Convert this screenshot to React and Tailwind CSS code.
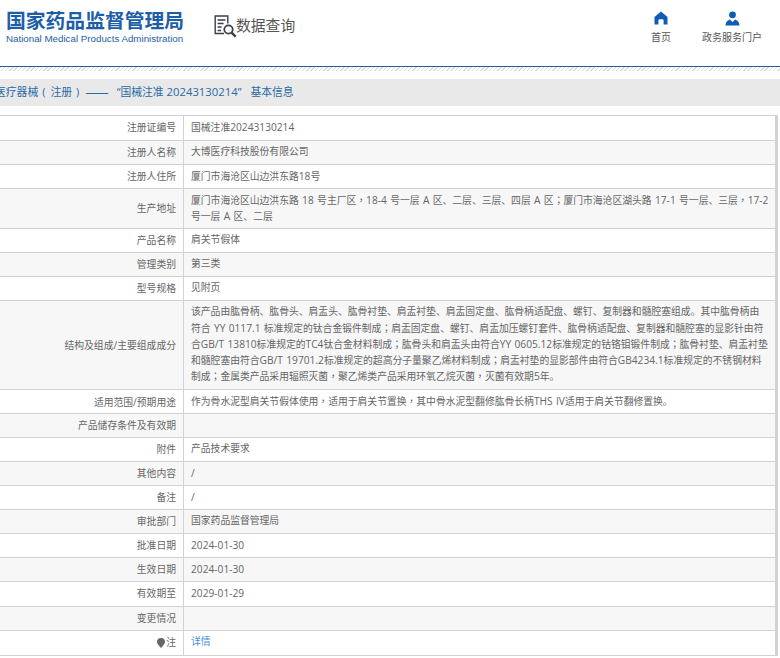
const FONT = "font-['Open_Sans','Noto_Sans_CJK_SC',sans-serif]";

const rows = [
  { label: '注册证编号', extra: 'min-h-[25px]', value: ['国械注准20243130214'] },
  { label: '注册人名称', value: ['大博医疗科技股份有限公司'] },
  { label: '注册人住所', value: ['厦门市海沧区山边洪东路18号'] },
  {
    label: '生产地址',
    value: [
      '厦门市海沧区山边洪东路 18 号主厂区，18-4 号一层 A 区、二层、三层、四层 A 区；厦门市海沧区湖头路 17-1 号一层、三层，17-2',
      '号一层 A 区、二层',
    ],
  },
  { label: '产品名称', value: ['肩关节假体'] },
  { label: '管理类别', value: ['第三类'] },
  { label: '型号规格', value: ['见附页'] },
  {
    label: '结构及组成/主要组成成分',
    extra: 'min-h-[89px]',
    value: [
      '该产品由肱骨柄、肱骨头、肩盂头、肱骨衬垫、肩盂衬垫、肩盂固定盘、肱骨柄适配盘、螺钉、复制器和髓腔塞组成。其中肱骨柄由',
      '符合 YY 0117.1 标准规定的钛合金锻件制成；肩盂固定盘、螺钉、肩盂加压螺钉套件、肱骨柄适配盘、复制器和髓腔塞的显影针由符',
      '合GB/T 13810标准规定的TC4钛合金材料制成；肱骨头和肩盂头由符合YY 0605.12标准规定的钴铬钼锻件制成；肱骨衬垫、肩盂衬垫',
      '和髓腔塞由符合GB/T 19701.2标准规定的超高分子量聚乙烯材料制成；肩盂衬垫的显影部件由符合GB4234.1标准规定的不锈钢材料',
      '制成；金属类产品采用辐照灭菌，聚乙烯类产品采用环氧乙烷灭菌，灭菌有效期5年。',
    ],
  },
  { label: '适用范围/预期用途', value: ['作为骨水泥型肩关节假体使用，适用于肩关节置换，其中骨水泥型翻修肱骨长柄THS IV适用于肩关节翻修置换。'] },
  { label: '产品储存条件及有效期', value: [''] },
  { label: '附件', value: ['产品技术要求'] },
  { label: '其他内容', value: ['/'] },
  { label: '备注', value: ['/'] },
  { label: '审批部门', value: ['国家药品监督管理局'] },
  { label: '批准日期', value: ['2024-01-30'] },
  { label: '生效日期', value: ['2024-01-30'] },
  { label: '有效期至', extra: 'min-h-[25px]', value: ['2029-01-29'] },
  { label: '变更情况', value: [''] },
  { label: '注', pin: true, link: true, value: ['详情'] },
];

// latin runs sit a bit larger than the CJK, and ，； are centred in their box
function Mixed({ text }) {
  return text.split(/([\x20-\x7e]+|[，；])/).map((part, i) => {
    if (/^[，；]$/.test(part)) return <span key={i} className="font-['Noto_Sans_CJK_TC',sans-serif]">{part}</span>;
    if (/^[\x20-\x7e]+$/.test(part)) return <span key={i} className="text-[10.2px] [word-spacing:0.7px]">{part}</span>;
    return part;
  });
}

function HomeIcon() {
  return (
    <svg width="14" height="14" viewBox="0 0 14 14" fill="#0f5cb4">
      <path d="M7 .5 13.5 6v7.500H9.600V9.400a1.200 1.200 0 0 0-1.200-1.200H5.600a1.200 1.200 0 0 0-1.200 1.200v4.100H.5V6z" />
    </svg>
  );
}

function UserIcon() {
  return (
    <svg width="15" height="15" viewBox="0 0 15 15" fill="#0f5cb4">
      <circle cx="7.5" cy="3.8" r="3.4" />
      <path d="M.5 14.500c0-3 1.600-5 4.400-6l2.600 2.600 2.600-2.600c2.800 1 4.400 3 4.400 6z" />
    </svg>
  );
}

function QueryIcon() {
  return (
    <svg width="23" height="24" viewBox="0 0 23 24" fill="none" stroke="#3a3f4a">
      <path strokeWidth="1.4" d="M10 18.500H1.200V1h12.600v7.500" />
      <path strokeWidth="1.4" d="M3.600 5h7.800M3.600 8.500h6M3.600 12h4M3.600 15.500h3.500" />
      <circle cx="14.500" cy="14.500" r="4.200" strokeWidth="1.800" />
      <path strokeWidth="2.400" d="m17.600 17.600 4 4" />
    </svg>
  );
}

export default function App() {
  return (
    <div className={`w-[780px] h-[658px] overflow-hidden bg-white ${FONT}`}>
      <header className="h-[66px] flex items-start">
        <div className="ml-[6px] mt-[9px] w-[180px]">
          <div className="text-[19.8px] leading-[24px] font-bold text-[#1d5ea8] whitespace-nowrap">国家药品监督管理局</div>
          <div className="font-['Liberation_Sans',sans-serif] text-[9.75px] leading-[12px] text-[#1d5ea8] whitespace-nowrap">National Medical Products Administration</div>
        </div>
        <div className="ml-[28px] mt-[15px] flex items-center">
          <QueryIcon />
          <span className="text-[14.8px] leading-[22px] text-[#555] -ml-[1px] -mt-[5px]">数据查询</span>
        </div>
        <nav className="ml-auto mr-[18px] mt-[11px] flex text-[10px] leading-[14px] text-[#555]">
          <div className="flex flex-col items-center gap-[5px] mr-[31px]">
            <HomeIcon />
            <span>首页</span>
          </div>
          <div className="flex flex-col items-center gap-[4px]">
            <UserIcon />
            <span>政务服务门户</span>
          </div>
        </nav>
      </header>
      <div className="h-[5px] border-t border-[#1d5f9f] bg-[repeating-linear-gradient(135deg,#dcdcdc_0,#dcdcdc_1px,#ffffff_1px,#ffffff_3px)]" />
      <div className="mt-[8px] h-[27px] bg-[#e9e9e9] flex items-center -ml-[5px] text-[10.8px] text-[#2a6aa5] whitespace-nowrap">
        <span>医疗器械</span>
        <span className="ml-[4px] mr-[5px]">(</span>
        <span>注册</span>
        <span className="ml-[4px]">)</span>
        <span className="ml-[6px] -mt-[4px] text-[14px] leading-none font-['Noto_Sans_CJK_SC',sans-serif]">——</span>
        <span className="ml-[8px]">“国械注准</span>
        <span className="ml-[3px] text-[11.3px]">20243130214</span>
        <span>”</span>
        <span className="ml-[9px]">基本信息</span>
      </div>
      <div className="mt-[9px] mr-[2px] border-t border-b border-r-[3px] border-[#d2d2d2] text-[9.8px] leading-[16px] text-[#666]">
        {rows.map((row, i) => (
          <div
            key={row.label}
            className={`grid grid-cols-[184px_1fr] ${i % 2 ? 'bg-[#f7f7f7]' : 'bg-white'} ${i < rows.length - 1 ? 'border-b border-[#d2d2d2]' : ''} min-h-[24px] ${row.extra || ''}`}
          >
            <div className="border-r border-[#d2d2d2] pr-[7px] flex items-center justify-end gap-[1px] whitespace-nowrap">
              {row.pin && (
                <svg width="8" height="10" viewBox="0 0 8 10" fill="#666">
                  <path d="M4 0a4 4 0 0 1 4 4c0 2-2.400 4.200-4 6-1.600-1.800-4-4-4-6a4 4 0 0 1 4-4z" />
                </svg>
              )}
              <span className="h-[16px]"><Mixed text={row.label} /></span>
            </div>
            <div className={`pl-[7px] pt-[3px] pb-[4px] whitespace-nowrap ${row.link ? 'text-[#4a90e2]' : ''}`}>
              {row.value.map((line, j) => (
                <div key={j} className="h-[16px]"><Mixed text={line} /></div>
              ))}
            </div>
          </div>
        ))}
      </div>
    </div>
  );
}
